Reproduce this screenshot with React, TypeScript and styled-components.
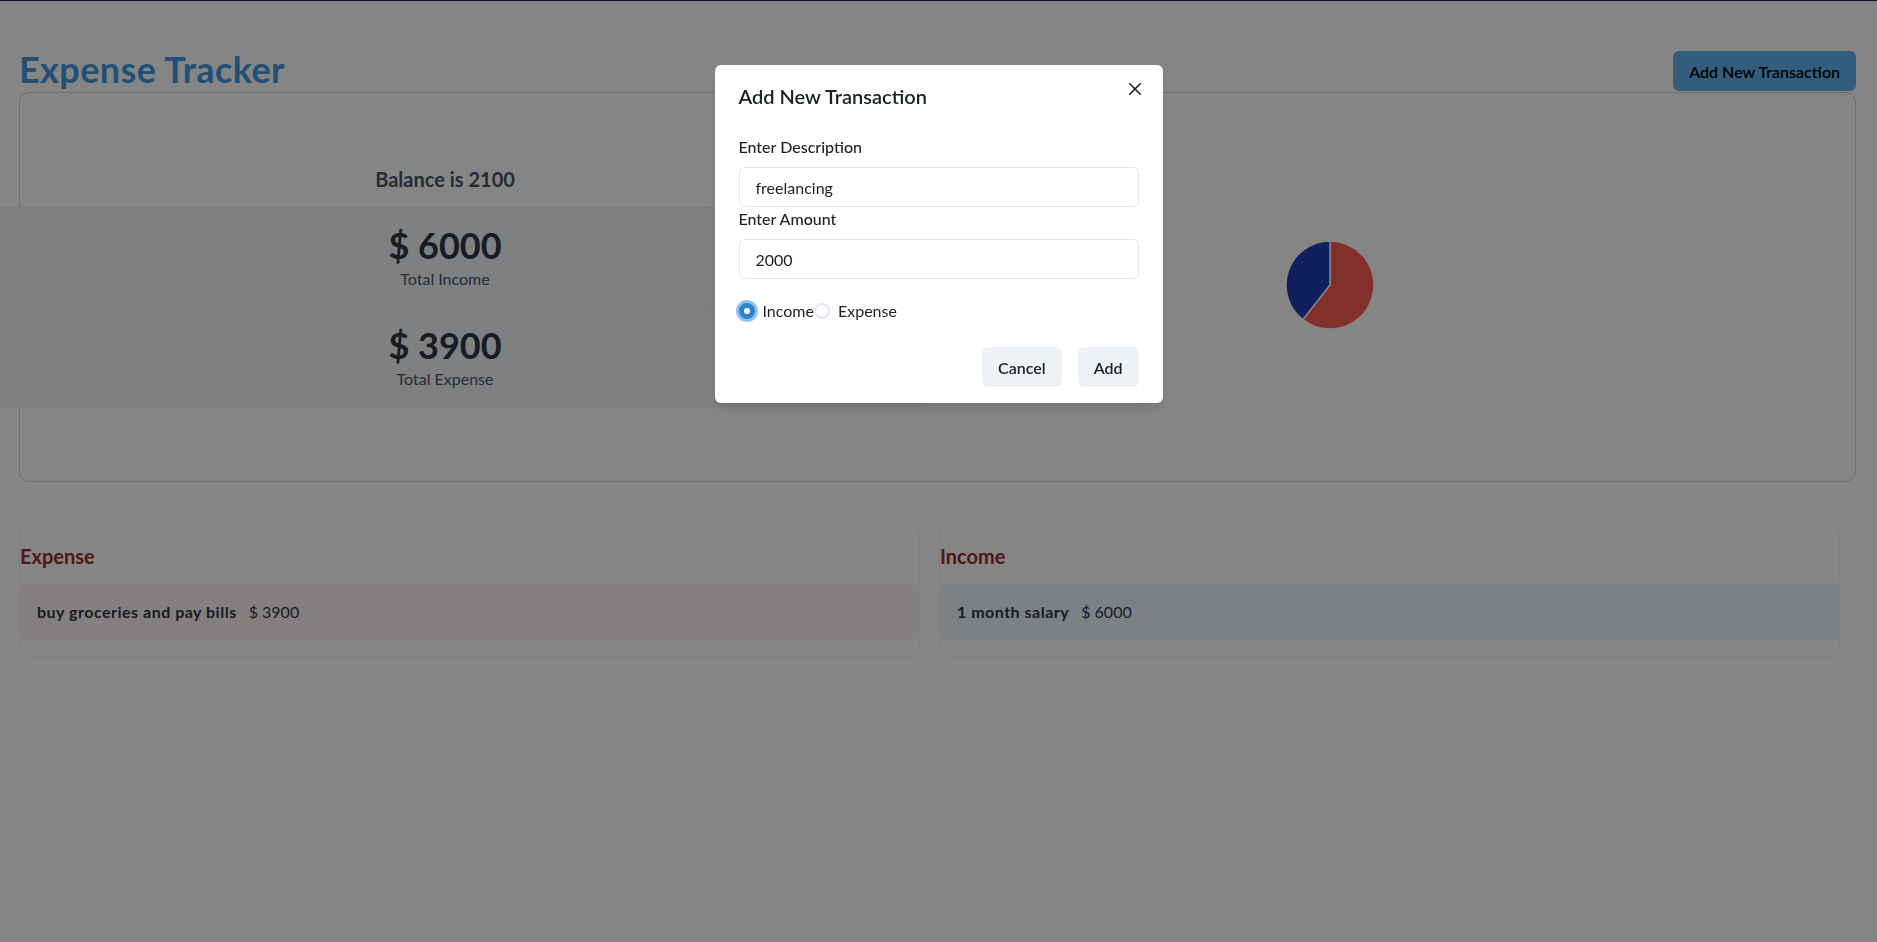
import React, { useState } from "react";
import styled, { createGlobalStyle } from "styled-components";

const FONT = `Lato, "Open Sans", "Liberation Sans", sans-serif`;

const GlobalStyle = createGlobalStyle`
  *, *::before, *::after { box-sizing: border-box; }
  html, body { margin: 0; padding: 0; }
  body {
    background: #ffffff;
    font-family: ${FONT};
    color: #1A202C;
    border-top: 1px solid #3d0c63;
    overflow: hidden;
  }
  button, input { font-family: inherit; }
`;

const Page = styled.main`
  padding: 47px 21px 0 19px;
`;

const HeaderRow = styled.header`
  display: flex;
  justify-content: space-between;
  align-items: flex-end;
`;

const Title = styled.h1`
  margin: 0;
  font-size: 36px;
  line-height: 1.2;
  font-weight: 700;
  letter-spacing: 0.4px;
  color: #4299e1;
`;

const PrimaryButton = styled.button`
  height: 40px;
  padding: 0 16px;
  border: none;
  border-radius: 6px;
  background: #63b3ed;
  color: #000000;
  font-size: 16px;
  font-weight: 600;
  cursor: pointer;
`;

const SummaryCard = styled.section`
  margin-top: 1px;
  padding: 24px;
  border: 1px solid #cbd5e0;
  border-radius: 10px;
  background: #ffffff;
  display: flex;
  align-items: center;
`;

const StatsColumn = styled.div`
  flex: 1;
  display: flex;
  flex-direction: column;
  align-items: center;
  margin: 0 8px 0 -80px;
`;

const Balance = styled.h2`
  margin: 0 0 16px;
  font-size: 20px;
  line-height: 1.2;
  font-weight: 700;
  color: #4a5568;
`;

const StatBox = styled.div`
  width: 100%;
  height: 100px;
  display: flex;
  justify-content: space-evenly;
  align-items: center;
  background: #f4f5f7;
  border: 1px solid #eceef2;
`;

const StatInner = styled.div`
  display: flex;
  flex-direction: column;
  align-items: center;
`;

const StatValue = styled.h2`
  margin: 0;
  font-size: 36px;
  line-height: 1.2;
  font-weight: 700;
  color: #2d3748;
`;

const StatLabel = styled.p`
  margin: 0;
  font-size: 16px;
  line-height: 1.5;
  color: #4a5568;
`;

const ChartColumn = styled.div`
  flex: 1;
  height: 300px;
  margin: 40px 20px 0 -85px;
  padding-bottom: 44px;
  display: flex;
  align-items: center;
  justify-content: center;
`;

const ListsRow = styled.div`
  display: flex;
  gap: 19px;
  padding-right: 16px;
  margin-top: 41px;
`;

const ListCard = styled.section`
  flex: 1;
  background: #ffffff;
  border: 1px solid #f2f4f7;
  border-radius: 10px;
  padding: 20px 0 15px;
`;

const ListHeading = styled.h3`
  margin: 0 0 15px;
  font-size: 20px;
  line-height: 1.2;
  font-weight: 700;
  color: #9b2c2c;
`;

const ListItem = styled.div<{ $tone: "expense" | "income" }>`
  display: flex;
  align-items: center;
  gap: 12px;
  padding: 16px;
  border-radius: 8px;
  border: 1px solid ${(p) => (p.$tone === "expense" ? "#fff5f5" : "#ebf8ff")};
  background: ${(p) => (p.$tone === "expense" ? "#fff5f5" : "#ebf8ff")};
  font-size: 16px;
  line-height: 1.5;
  color: #2d3748;
`;

const ItemName = styled.span`
  font-weight: 700;
  letter-spacing: 0.5px;
`;

const ItemAmount = styled.span`
  font-weight: 400;
`;

/* ---------- Modal ---------- */

const Overlay = styled.div`
  position: fixed;
  inset: 0;
  background: rgba(0, 0, 0, 0.48);
`;

const ModalPositioner = styled.div`
  position: fixed;
  inset: 0;
  display: flex;
  justify-content: center;
  align-items: flex-start;
`;

const Dialog = styled.div`
  position: relative;
  margin-top: 65px;
  width: 448px;
  background: #ffffff;
  border-radius: 6px;
  box-shadow: 0 10px 15px -3px rgba(0, 0, 0, 0.1), 0 4px 6px -2px rgba(0, 0, 0, 0.05);
`;

const ModalHeader = styled.header`
  padding: 16px 24px;
  font-size: 20px;
  line-height: 1.5;
  font-weight: 600;
  color: #1a202c;
`;

const CloseButton = styled.button`
  position: absolute;
  top: 8px;
  right: 12px;
  width: 32px;
  height: 32px;
  display: flex;
  align-items: center;
  justify-content: center;
  border: none;
  border-radius: 6px;
  background: transparent;
  color: #1a202c;
  cursor: pointer;
  padding: 0;
`;

const ModalBody = styled.div`
  padding: 8px 24px;
`;

const FieldLabel = styled.label`
  display: block;
  margin-bottom: 8px;
  font-size: 16px;
  line-height: 1.5;
  font-weight: 500;
  color: #1a202c;
`;

const TextInput = styled.input`
  display: block;
  width: 100%;
  height: 40px;
  padding: 0 16px;
  border: 1px solid #e2e8f0;
  border-radius: 6px;
  background: #ffffff;
  font-size: 16px;
  color: #1a202c;
  outline: none;
`;

const RadioRow = styled.div`
  display: flex;
  margin-top: 20px;
`;

const RadioOption = styled.label`
  display: inline-flex;
  align-items: center;
  cursor: pointer;
`;

const RadioControl = styled.span<{ $checked: boolean }>`
  width: 16px;
  height: 16px;
  flex-shrink: 0;
  border-radius: 50%;
  border: 2px solid ${(p) => (p.$checked ? "#3182ce" : "#e2e8f0")};
  background: ${(p) => (p.$checked ? "#3182ce" : "#ffffff")};
  display: flex;
  align-items: center;
  justify-content: center;
  box-shadow: ${(p) => (p.$checked ? "0 0 0 3px rgba(66, 153, 225, 0.6)" : "none")};
  &::before {
    content: "";
    width: 6px;
    height: 6px;
    border-radius: 50%;
    background: ${(p) => (p.$checked ? "#ffffff" : "transparent")};
  }
`;

const RadioText = styled.span`
  margin-left: 8px;
  font-size: 16px;
  line-height: 1.5;
  color: #1a202c;
`;

const ModalFooter = styled.footer`
  display: flex;
  justify-content: flex-end;
  gap: 16px;
  padding: 16px 24px;
`;

const SecondaryButton = styled.button`
  height: 40px;
  padding: 0 16px;
  border: none;
  border-radius: 6px;
  background: #edf2f7;
  color: #1a202c;
  font-size: 16px;
  font-weight: 600;
  cursor: pointer;
`;

/* ---------- Pie chart ---------- */

function PieChart({ income, expense }: { income: number; expense: number }) {
  const size = 90;
  const c = size / 2;
  const r = 44;
  const total = income + expense;
  const angle = (income / total) * Math.PI * 2;
  const ex = c + r * Math.sin(angle);
  const ey = c - r * Math.cos(angle);
  const large = angle > Math.PI ? 1 : 0;
  const redPath = `M${c},${c} L${c},${c - r} A${r},${r} 0 ${large} 1 ${ex.toFixed(2)},${ey.toFixed(2)} Z`;
  const bluePath = `M${c},${c} L${ex.toFixed(2)},${ey.toFixed(2)} A${r},${r} 0 ${1 - large} 1 ${c},${c - r} Z`;
  return (
    <svg width={size} height={size} viewBox={`0 0 ${size} ${size}`}>
      <path d={redPath} fill="#fc5d53" stroke="#ffffff" strokeWidth={1.5} strokeLinejoin="round" />
      <path d={bluePath} fill="#1f3cb4" stroke="#ffffff" strokeWidth={1.5} strokeLinejoin="round" />
    </svg>
  );
}

function CloseIcon() {
  return (
    <svg width="12" height="12" viewBox="0 0 24 24" aria-hidden="true">
      <path
        fill="currentColor"
        d="M.439,21.44a1.5,1.5,0,0,0,2.122,2.121L11.823,14.3a.25.25,0,0,1,.354,0l9.262,9.263a1.5,1.5,0,1,0,2.122-2.121L14.3,12.177a.25.25,0,0,1,0-.354l9.263-9.262A1.5,1.5,0,0,0,21.439.44L12.177,9.7a.25.25,0,0,1-.354,0L2.561.44A1.5,1.5,0,0,0,.439,2.561L9.7,11.823a.25.25,0,0,1,0,.354Z"
      />
    </svg>
  );
}

export default function App() {
  const [description, setDescription] = useState("freelancing");
  const [amount, setAmount] = useState("2000");
  const [type, setType] = useState<"income" | "expense">("income");

  const totalIncome = 6000;
  const totalExpense = 3900;

  return (
    <>
      <GlobalStyle />
      <Page>
        <HeaderRow>
          <Title>Expense Tracker</Title>
          <PrimaryButton>Add New Transaction</PrimaryButton>
        </HeaderRow>

        <SummaryCard>
          <StatsColumn>
            <Balance>Balance is {totalIncome - totalExpense}</Balance>
            <StatBox>
              <StatInner>
                <StatValue>$ {totalIncome}</StatValue>
                <StatLabel>Total Income</StatLabel>
              </StatInner>
            </StatBox>
            <StatBox>
              <StatInner>
                <StatValue>$ {totalExpense}</StatValue>
                <StatLabel>Total Expense</StatLabel>
              </StatInner>
            </StatBox>
          </StatsColumn>
          <ChartColumn>
            <PieChart income={totalIncome} expense={totalExpense} />
          </ChartColumn>
        </SummaryCard>

        <ListsRow>
          <ListCard>
            <ListHeading>Expense</ListHeading>
            <ListItem $tone="expense">
              <ItemName>buy groceries and pay bills</ItemName>
              <ItemAmount>$ 3900</ItemAmount>
            </ListItem>
          </ListCard>
          <ListCard>
            <ListHeading>Income</ListHeading>
            <ListItem $tone="income">
              <ItemName>1 month salary</ItemName>
              <ItemAmount>$ 6000</ItemAmount>
            </ListItem>
          </ListCard>
        </ListsRow>
      </Page>

      <Overlay />
      <ModalPositioner>
        <Dialog role="dialog" aria-modal="true">
          <ModalHeader>Add New Transaction</ModalHeader>
          <CloseButton aria-label="Close">
            <CloseIcon />
          </CloseButton>
          <ModalBody>
            <FieldLabel htmlFor="desc">Enter Description</FieldLabel>
            <TextInput id="desc" value={description} onChange={(e) => setDescription(e.target.value)} />
            <FieldLabel htmlFor="amount">Enter Amount</FieldLabel>
            <TextInput id="amount" value={amount} onChange={(e) => setAmount(e.target.value)} />
            <RadioRow>
              <RadioOption onClick={() => setType("income")}>
                <RadioControl $checked={type === "income"} />
                <RadioText>Income</RadioText>
              </RadioOption>
              <RadioOption onClick={() => setType("expense")}>
                <RadioControl $checked={type === "expense"} />
                <RadioText>Expense</RadioText>
              </RadioOption>
            </RadioRow>
          </ModalBody>
          <ModalFooter>
            <SecondaryButton>Cancel</SecondaryButton>
            <SecondaryButton>Add</SecondaryButton>
          </ModalFooter>
        </Dialog>
      </ModalPositioner>
    </>
  );
}
